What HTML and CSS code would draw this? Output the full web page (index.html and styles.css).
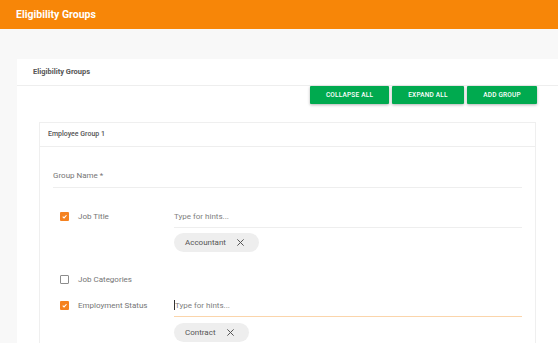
FILE: index.html
```html
<!DOCTYPE html>
<html>
<head>
<meta charset="utf-8">
<link rel="stylesheet" href="styles.css">
</head>
<body>
<header class="topbar">Eligibility Groups</header>
<main class="page">
  <section class="card">
    <div class="card-head">Eligibility Groups</div>
    <div class="toolbar">
      <button class="btn btn-collapse">COLLAPSE ALL</button>
      <button class="btn btn-expand">EXPAND ALL</button>
      <button class="btn btn-add">ADD GROUP</button>
    </div>
    <div class="group">
      <div class="group-head">Employee Group 1</div>
      <div class="group-body">
        <div class="field">Group Name *</div>

        <div class="crit crit-first">
          <span class="cb checked"><svg viewBox="0 0 10 10"><path d="M3 5.2 L4.5 6.6 L7.2 3.6" fill="none" stroke="#fff" stroke-width="1.2"/></svg></span>
          <span class="crit-label">Job Title</span>
          <div class="crit-input">
            <div class="hint">Type for hints...</div>
            <span class="chip chip-acc">Accountant<svg class="x" viewBox="0 0 10 10"><path d="M1.5 1.5 L8.5 8.5 M8.5 1.5 L1.5 8.5" stroke="#555" stroke-width="1.1"/></svg></span>
          </div>
        </div>

        <div class="crit crit-mid">
          <span class="cb"></span>
          <span class="crit-label">Job Categories</span>
        </div>

        <div class="crit crit-last">
          <span class="cb checked"><svg viewBox="0 0 10 10"><path d="M3 5.2 L4.5 6.6 L7.2 3.6" fill="none" stroke="#fff" stroke-width="1.2"/></svg></span>
          <span class="crit-label">Employment Status</span>
          <div class="crit-input">
            <div class="hint focus"><span class="caret"></span>Type for hints...</div>
            <span class="chip chip-con">Contract<svg class="x" viewBox="0 0 10 10"><path d="M1.5 1.5 L8.5 8.5 M8.5 1.5 L1.5 8.5" stroke="#555" stroke-width="1.1"/></svg></span>
          </div>
        </div>
      </div>
    </div>
  </section>
</main>
</body>
</html>
```
FILE: styles.css
```css
* { box-sizing: border-box; }
html, body { margin: 0; padding: 0; }
body {
  font-family: Roboto, "Liberation Sans", sans-serif;
  background: #f8f8f8;
  width: 558px;
  height: 343px;
  overflow: hidden;
}
.topbar {
  height: 29px;
  background: #f78608;
  color: #fff;
  font-weight: 700;
  font-size: 10.5px;
  line-height: 29px;
  padding-left: 16px;
}
.page {
  padding: 30px 0 0 17px;
}
.card {
  background: #fff;
  height: 284px;
  overflow: hidden;
}
.card-head {
  height: 27px;
  line-height: 26px;
  padding-left: 16px;
  font-size: 7.5px;
  font-weight: 700;
  color: #555;
  border-bottom: 1px solid #eeeeee;
}
.toolbar {
  display: flex;
  justify-content: flex-end;
  gap: 3px;
  padding-right: 21px;
}
.btn {
  height: 18px;
  border: none;
  border-radius: 1px;
  background: #00aa4f;
  color: #fff;
  font-family: Roboto, "Liberation Sans", sans-serif;
  font-size: 6.5px;
  font-weight: 500;
  letter-spacing: 0.2px;
  padding: 0;
  box-shadow: 0 1px 3px rgba(0,0,0,0.3);
}
.btn-collapse { width: 79px; }
.btn-expand { width: 72px; }
.btn-add { width: 70px; }
.group {
  margin: 18px 22px 0 22px;
  border: 1px solid #efefef;
  border-bottom: none;
}
.group-head {
  height: 24px;
  line-height: 23px;
  padding-left: 8px;
  font-size: 7px;
  font-weight: 500;
  color: #555;
  border-bottom: 1px solid #eeeeee;
}
.group-body {
  padding: 0 13px 20px 13px;
}
.field {
  margin-top: 22px;
  font-size: 8px;
  line-height: 13px;
  color: #757575;
  padding-bottom: 5px;
  border-bottom: 1px solid #eeeeee;
}
.crit {
  display: grid;
  grid-template-columns: 25px 96px 1fr;
  align-items: start;
}
.crit-first { margin-top: 22px; }
.crit-mid { margin-top: 21px; }
.crit-last { margin-top: 13px; }
.cb {
  margin: 2px 0 0 7px;
  width: 9px;
  height: 9px;
  border: 1px solid #8c8c8c;
  border-radius: 1px;
  display: block;
}
.cb.checked {
  border: none;
  background: #f58220;
}
.cb svg { width: 9px; height: 9px; display: block; }
.crit-label {
  font-size: 8px;
  line-height: 13px;
  color: #757575;
}
.hint {
  font-size: 8px;
  line-height: 13px;
  color: #808080;
  padding-bottom: 4px;
  border-bottom: 1px solid #eeeeee;
}
.hint.focus {
  border-bottom-color: #fbd5ab;
}
.caret {
  display: inline-block;
  width: 1px;
  height: 10px;
  background: #333;
  vertical-align: -2px;
}
.chip {
  display: inline-flex;
  align-items: center;
  height: 19px;
  margin-top: 5px;
  border-radius: 10px;
  background: #eeeeee;
  font-size: 8px;
  color: #555;
  padding-left: 11px;
}
.chip-acc { width: 85px; }
.chip-con { width: 75px; margin-top: 6px; }
.chip .x {
  width: 9px;
  height: 9px;
  margin-left: 10px;
}
```
